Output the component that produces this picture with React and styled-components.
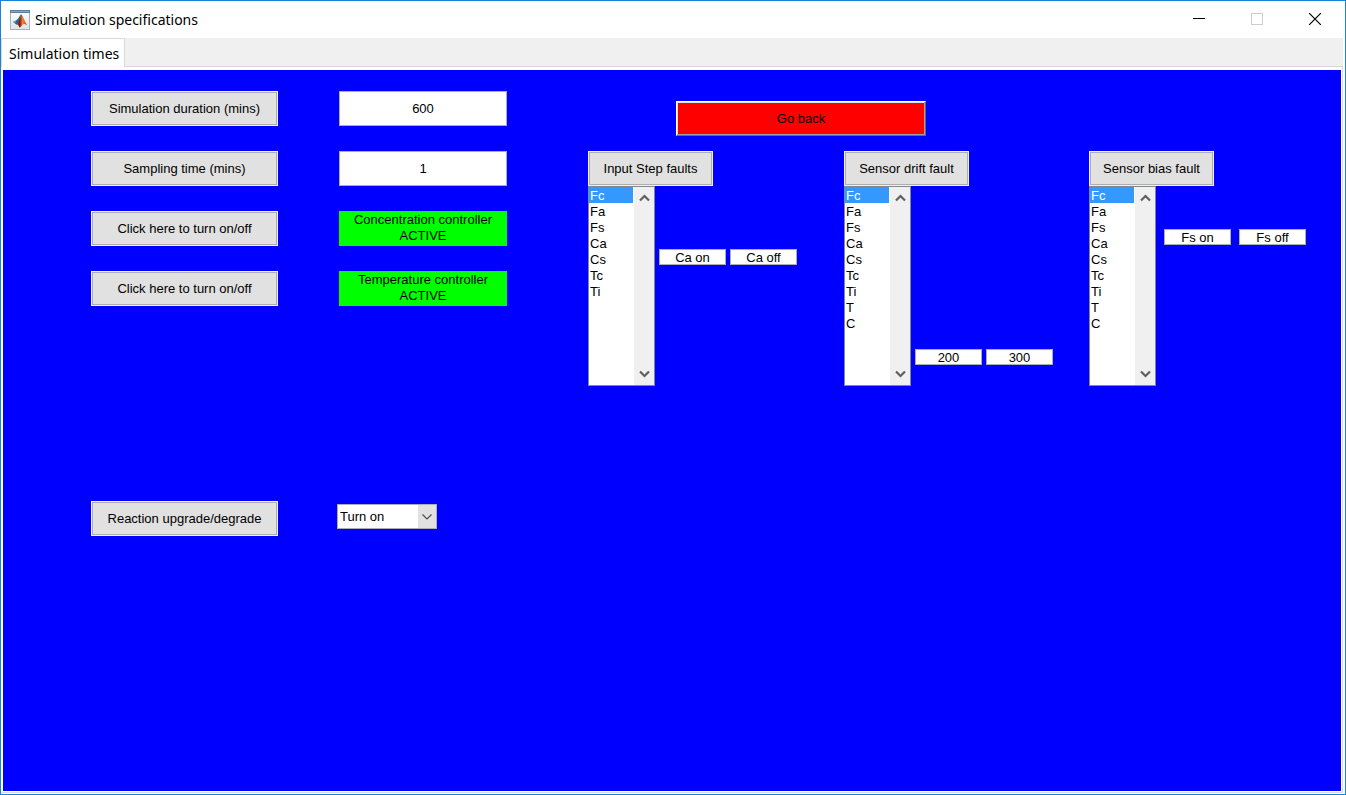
import React, { useState } from "react";
import styled, { createGlobalStyle } from "styled-components";

const GlobalStyle = createGlobalStyle`
  *, *::before, *::after { box-sizing: border-box; }
  body { margin: 0; }
  button, input, select { font: inherit; color: inherit; margin: 0; border-radius: 0; }
`;

const Window = styled.div`
  display: flex;
  flex-direction: column;
  min-height: 100vh;
  border: 1px solid #1883d7;
  background: #fff;
  color: #000;
  font: 13px/16px "Liberation Sans", Arial, sans-serif;
`;

const TitleBar = styled.header`
  display: flex;
  align-items: center;
  height: 37px;
  padding-left: 9px;
  gap: 5px;
`;

const Title = styled.h1`
  flex: 1;
  margin: 0;
  font: 14px/20px "Noto Sans", "Open Sans", sans-serif;
`;

const CaptionButtons = styled.div`
  display: flex;
  align-self: flex-start;
  padding-right: 1px;
`;

const CaptionButton = styled.button`
  display: flex;
  align-items: center;
  justify-content: center;
  width: 58px;
  height: 36px;
  padding: 0;
  border: 0;
  background: transparent;
`;

const TabStrip = styled.nav`
  display: flex;
  height: 29px;
  margin-right: 2px;
  background: #f0f0f0;
  border-bottom: 1px solid #d9d9d9;
`;

const Tab = styled.button`
  height: 29px;
  padding: 2px 5px 0 7px;
  border: 1px solid #d9d9d9;
  border-bottom: 0;
  background: #fff;
  font: 14px/20px "Noto Sans", "Open Sans", sans-serif;
`;

const PanelFrame = styled.div`
  display: flex;
  flex: 1;
  margin: 0 2px 1px 0;
  padding: 3px 1px 1px 2px;
  border-right: 1px solid #dcdcdc;
  border-bottom: 1px solid #dcdcdc;
`;

const Panel = styled.main`
  display: flex;
  flex: 1;
  align-items: flex-start;
  gap: 81px;
  padding: 21px 35px 21px 88px;
  background: #00f;
`;

const Settings = styled.section`
  display: flex;
  flex-direction: column;
  gap: 25px;
`;

const SettingRow = styled.div`
  display: flex;
  align-items: flex-start;
  gap: ${(p) => p.$gap ?? 61}px;
  margin-top: ${(p) => p.$space ?? 0}px;
`;

const PushButton = styled.button`
  width: ${(p) => p.$width ?? 187}px;
  height: 35px;
  padding: 0;
  border: 1px solid #f0f0f0;
  background: #e1e1e1;
  box-shadow: inset 0 0 0 1px #adadad;
`;

const Field = styled.input`
  width: ${(p) => (p.$small ? 67 : 168)}px;
  height: ${(p) => (p.$small ? 16 : 35)}px;
  padding: ${(p) => (p.$small ? "1px 0 0" : "0")};
  border: 1px solid #abadb3;
  background: #fff;
  text-align: center;
`;

const Status = styled.output`
  width: 168px;
  height: 35px;
  padding: 1px 12px 0;
  background: #0f0;
  text-align: center;
`;

const ComboWrap = styled.div`
  display: grid;
  grid-template: "box" 25px / 100px;
  margin-top: 3px;
`;

const Combo = styled.select`
  grid-area: box;
  appearance: none;
  padding: 0 20px 0 2px;
  border: 1px solid #abadb3;
  background: #fff;
`;

const ComboArrow = styled.span`
  grid-area: box;
  justify-self: end;
  display: flex;
  align-items: center;
  justify-content: center;
  width: 18px;
  margin: 1px;
  background: #e1e1e1;
  pointer-events: none;
`;

const Faults = styled.section`
  flex: 1;
  display: flex;
  flex-direction: column;
  gap: 15px;
  padding-top: 10px;
`;

const BackButton = styled.button`
  width: 250px;
  height: 35px;
  margin-left: 88px;
  padding: 0;
  border: 1px solid;
  border-color: #fff #696969 #696969 #fff;
  background: #f00;
  box-shadow: inset -1px -1px #a0a0a0, inset 1px 1px #e3e3e3;
`;

const FaultColumns = styled.div`
  display: grid;
  grid-template-columns: 256fr 245fr 217fr;
`;

const FaultGroup = styled.div`
  display: flex;
  flex-direction: column;
`;

const FaultBody = styled.div`
  display: flex;
  align-items: flex-start;
  gap: ${(p) => p.$gap}px;
`;

const ListFrame = styled.div`
  display: flex;
  width: 67px;
  height: 200px;
  border: 1px solid #828790;
  background: #fff;
`;

const List = styled.select`
  flex: 1;
  min-width: 0;
  height: 198px;
  padding: 0 1px 0 0;
  border: 0;
  outline: 0;
  background: #fff;
  overflow: hidden;
  scrollbar-width: none;

  option {
    height: 16px;
    min-height: 16px;
    padding: 1px 1px 0;
    line-height: 16px;
  }

  option:checked {
    background: #3399ff linear-gradient(#3399ff, #3399ff);
    color: #fff;
    -webkit-text-fill-color: #fff;
  }
`;

const ScrollTrack = styled.div`
  display: flex;
  flex-direction: column;
  justify-content: space-between;
  width: 20px;
  background: #f0f0f0;
`;

const ScrollButton = styled.button`
  display: flex;
  align-items: center;
  justify-content: center;
  height: 22px;
  padding: 0;
  border: 0;
  background: transparent;
`;

const Times = styled.div`
  display: flex;
  gap: ${(p) => p.$gap}px;
  padding-top: ${(p) => p.$drop}px;
`;

const inputs = ["Fc", "Fa", "Fs", "Ca", "Cs", "Tc", "Ti"];
const sensors = [...inputs, "T", "C"];

const faults = [
  { id: "step", title: "Input Step faults", items: inputs, on: "Ca on", off: "Ca off", gap: 4, drop: 63 },
  { id: "drift", title: "Sensor drift fault", items: sensors, on: "200", off: "300", gap: 4, drop: 163 },
  { id: "bias", title: "Sensor bias fault", items: sensors, on: "Fs on", off: "Fs off", gap: 8, drop: 43 },
];

function MatlabIcon() {
  return (
    <svg width="20" height="20" viewBox="0 0 20 20" aria-hidden="true">
      <defs>
        <linearGradient id="peak" x1="0" x2="1">
          <stop offset="0" stopColor="#a8341a" />
          <stop offset="0.3" stopColor="#7a1c10" />
          <stop offset="0.55" stopColor="#f08030" />
          <stop offset="1" stopColor="#d0481a" />
        </linearGradient>
        <linearGradient id="face" x1="0" y1="0" x2="0" y2="1">
          <stop offset="0" stopColor="#fdfdfd" />
          <stop offset="1" stopColor="#dfe4e8" />
        </linearGradient>
      </defs>
      <rect x="0.5" y="0.5" width="19" height="19" fill="url(#face)" stroke="#a9b1b8" />
      <rect x="0" y="0" width="20" height="3" fill="#5d7f9f" />
      <rect x="1" y="1" width="18" height="1" fill="#86a6c2" />
      <path d="M2.500 12L6.500 10L8.500 11.500L6.500 14.500Z" fill="#4a9fd8" />
      <path d="M6.500 10C8.500 9.500 9.500 5.500 11.200 4.300L10 12L6.500 14.500L5 13.500Z" fill="#2f6396" />
      <path d="M11.200 4.300C13 5.500 14.500 11.500 17.500 15.500C15 13.500 13.500 13.500 12.300 15C11.300 16.500 10.500 17.500 9.300 17.500C8.700 15.500 8 14.300 6.500 14.500C9 13 10 8 11.200 4.300Z" fill="url(#peak)" />
    </svg>
  );
}

function Chevron({ up }) {
  return (
    <svg width="11" height="8" viewBox="0 0 11 8" aria-hidden="true">
      <path d={up ? "M1 6.500L5.500 2L10 6.500" : "M1 1.500L5.500 6L10 1.500"} fill="none" stroke="#606060" strokeWidth="2.200" />
    </svg>
  );
}

function Fault({ id, title, items, on, off, gap, drop }) {
  return (
    <FaultGroup>
      <PushButton type="button" id={id} $width={125}>{title}</PushButton>
      <FaultBody $gap={gap}>
        <ListFrame>
          <List size={12} defaultValue="Fc" aria-labelledby={id}>
            {items.map((name) => <option key={name}>{name}</option>)}
          </List>
          <ScrollTrack>
            <ScrollButton type="button" aria-label="Scroll up"><Chevron up /></ScrollButton>
            <ScrollButton type="button" aria-label="Scroll down"><Chevron /></ScrollButton>
          </ScrollTrack>
        </ListFrame>
        <Times $gap={gap} $drop={drop}>
          <Field $small defaultValue={on} aria-label={`${title} start`} />
          <Field $small defaultValue={off} aria-label={`${title} end`} />
        </Times>
      </FaultBody>
    </FaultGroup>
  );
}

function Controller({ name }) {
  const [active, setActive] = useState(true);
  return (
    <SettingRow>
      <PushButton type="button" onClick={() => setActive(!active)}>Click here to turn on/off</PushButton>
      <Status>{name} controller {active ? "ACTIVE" : "INACTIVE"}</Status>
    </SettingRow>
  );
}

export default function App() {
  return (
    <Window>
      <GlobalStyle />
      <TitleBar>
        <MatlabIcon />
        <Title>Simulation specifications</Title>
        <CaptionButtons>
          <CaptionButton type="button" aria-label="Minimize">
            <svg width="12" height="12" viewBox="0 0 12 12"><path d="M0 5.500H12" stroke="#000" /></svg>
          </CaptionButton>
          <CaptionButton type="button" aria-label="Maximize" disabled>
            <svg width="12" height="12" viewBox="0 0 12 12"><rect x="0.5" y="0.5" width="11" height="11" fill="none" stroke="#ccc" /></svg>
          </CaptionButton>
          <CaptionButton type="button" aria-label="Close">
            <svg width="12" height="12" viewBox="0 0 12 12"><path d="M0 0L12 12M12 0L0 12" stroke="#000" strokeWidth="1.200" /></svg>
          </CaptionButton>
        </CaptionButtons>
      </TitleBar>
      <TabStrip>
        <Tab type="button">Simulation times</Tab>
      </TabStrip>
      <PanelFrame>
        <Panel>
          <Settings>
            <SettingRow>
              <PushButton type="button" id="duration">Simulation duration (mins)</PushButton>
              <Field defaultValue="600" aria-labelledby="duration" />
            </SettingRow>
            <SettingRow>
              <PushButton type="button" id="sampling">Sampling time (mins)</PushButton>
              <Field defaultValue="1" aria-labelledby="sampling" />
            </SettingRow>
            <Controller name="Concentration" />
            <Controller name="Temperature" />
            <SettingRow $gap={59} $space={170}>
              <PushButton type="button" id="reaction">Reaction upgrade/degrade</PushButton>
              <ComboWrap>
                <Combo defaultValue="Turn on" aria-labelledby="reaction">
                  <option>Turn on</option>
                  <option>Turn off</option>
                </Combo>
                <ComboArrow>
                  <svg width="10" height="6" viewBox="0 0 10 6" aria-hidden="true">
                    <path d="M0.500 0.500L5 5L9.500 0.500" fill="none" stroke="#505050" strokeWidth="1.200" />
                  </svg>
                </ComboArrow>
              </ComboWrap>
            </SettingRow>
          </Settings>
          <Faults>
            <BackButton type="button">Go back</BackButton>
            <FaultColumns>
              {faults.map((fault) => <Fault key={fault.id} {...fault} />)}
            </FaultColumns>
          </Faults>
        </Panel>
      </PanelFrame>
    </Window>
  );
}
